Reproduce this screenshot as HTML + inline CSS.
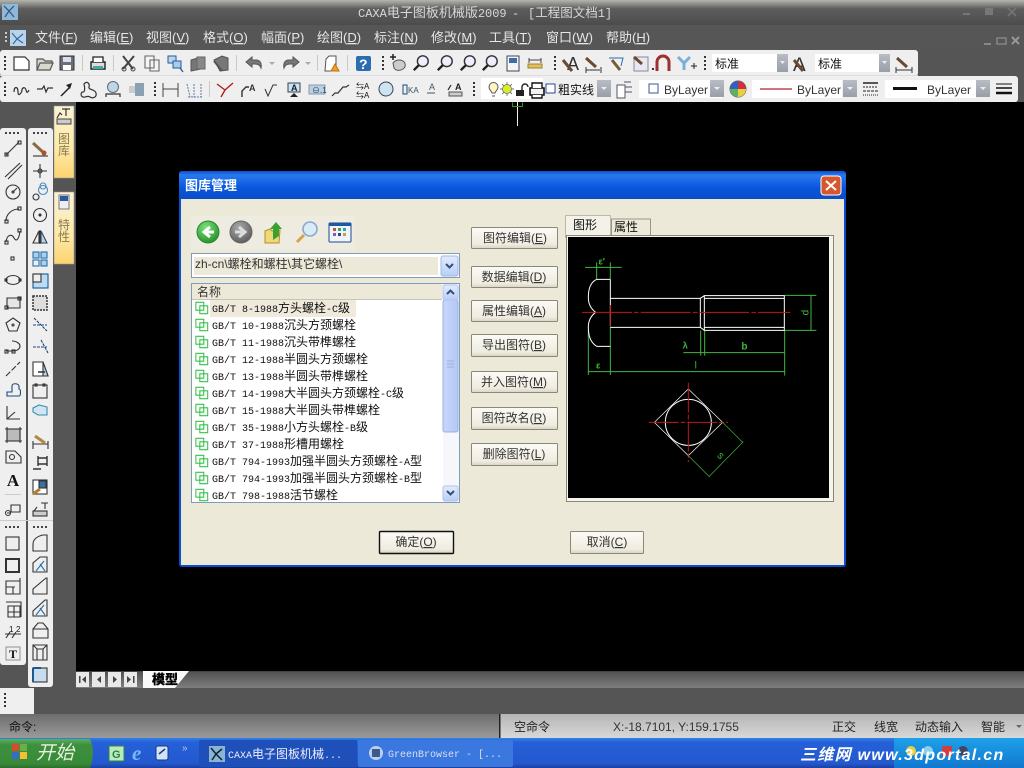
<!DOCTYPE html>
<html><head><meta charset="utf-8"><title>CAXA</title>
<style>
html,body{margin:0;padding:0;background:#000;overflow:hidden}
svg{display:block}
text{font-family:"Liberation Sans","WenQuanYi Zen Hei","Noto Sans CJK SC",sans-serif;font-size:12px;fill:#111}
.m{font-family:"Liberation Mono","WenQuanYi Zen Hei","Noto Sans CJK SC",monospace}
.menu{font-size:13px;fill:#e6e6e6}
.i{fill:none;stroke:#333;stroke-width:1.2}
.l{font-family:"Liberation Mono","WenQuanYi Zen Hei","Noto Sans CJK SC",monospace;font-size:10px;fill:#111}
.l tspan{font-size:12px}
.b{font-size:12px;fill:#333;text-anchor:middle}
.g{fill:none;stroke:#3fb83f;stroke-width:1}
.w{fill:none;stroke:#fff;stroke-width:1}
.r{fill:none;stroke:#c01818;stroke-width:1}
</style></head><body>
<svg width="1024" height="768" viewBox="0 0 1024 768" xmlns="http://www.w3.org/2000/svg">
<defs>
<linearGradient id="tt" x1="0" y1="0" x2="0" y2="1"><stop offset="0" stop-color="#b5b5b0"/><stop offset=".35" stop-color="#5d5d5d"/><stop offset="1" stop-color="#4c4c4c"/></linearGradient>
<linearGradient id="tb" x1="0" y1="0" x2="0" y2="1"><stop offset="0" stop-color="#4f4f4f"/><stop offset="1" stop-color="#7e7e7e"/></linearGradient>
<linearGradient id="cmd" x1="0" y1="0" x2="0" y2="1"><stop offset="0" stop-color="#6d6d6d"/><stop offset="1" stop-color="#9a9a9a"/></linearGradient>
<linearGradient id="cmd2" x1="0" y1="0" x2="0" y2="1"><stop offset="0" stop-color="#b5b5b5"/><stop offset="1" stop-color="#d8d8d8"/></linearGradient>
<linearGradient id="y" x1="0" y1="0" x2="0" y2="1"><stop offset="0" stop-color="#fbf3d6"/><stop offset=".6" stop-color="#fde9a8"/><stop offset="1" stop-color="#fdd36e"/></linearGradient>
<linearGradient id="dt" x1="0" y1="0" x2="0" y2="1"><stop offset="0" stop-color="#0a4fd4"/><stop offset=".15" stop-color="#2a78ee"/><stop offset=".6" stop-color="#0857de"/><stop offset="1" stop-color="#0a4dc6"/></linearGradient>
<linearGradient id="task" x1="0" y1="0" x2="0" y2="1"><stop offset="0" stop-color="#2f7fe8"/><stop offset=".15" stop-color="#2560d8"/><stop offset=".85" stop-color="#2458cf"/><stop offset="1" stop-color="#1a3f9e"/></linearGradient>
<linearGradient id="st" x1="0" y1="0" x2="0" y2="1"><stop offset="0" stop-color="#5fae5f"/><stop offset=".2" stop-color="#3d913d"/><stop offset=".85" stop-color="#388a38"/><stop offset="1" stop-color="#2a6f2a"/></linearGradient>
<linearGradient id="tray" x1="0" y1="0" x2="0" y2="1"><stop offset="0" stop-color="#1ea0ea"/><stop offset="1" stop-color="#1278cf"/></linearGradient>
<linearGradient id="btn" x1="0" y1="0" x2="0" y2="1"><stop offset="0" stop-color="#fbfaf5"/><stop offset=".8" stop-color="#efece0"/><stop offset="1" stop-color="#d8d4c4"/></linearGradient>
<linearGradient id="sb" x1="0" y1="0" x2="1" y2="0"><stop offset="0" stop-color="#c8d6fb"/><stop offset="1" stop-color="#b4c8f6"/></linearGradient>
<linearGradient id="ab" x1="0" y1="0" x2="0" y2="1"><stop offset="0" stop-color="#e4ecfd"/><stop offset="1" stop-color="#b8cdf6"/></linearGradient>
<linearGradient id="cb" x1="0" y1="0" x2="0" y2="1"><stop offset="0" stop-color="#b8bcc4"/><stop offset="1" stop-color="#9a9ea8"/></linearGradient>
<radialGradient id="gc" cx=".4" cy=".3" r=".8"><stop offset="0" stop-color="#7fe07f"/><stop offset="1" stop-color="#1c8a22"/></radialGradient>
<radialGradient id="gg" cx=".4" cy=".3" r=".8"><stop offset="0" stop-color="#aaa"/><stop offset="1" stop-color="#555"/></radialGradient>
<symbol id="li" viewBox="0 0 16 16" overflow="visible"><path d="M1 1.500h9v9H1zM5.500 5.500h9v9h-9z" fill="none" stroke="#35c24a" stroke-width="1.2"/></symbol>
<symbol id="mag" viewBox="0 0 20 20" overflow="visible"><circle cx="12" cy="8" r="6" fill="#eef" stroke="#333" stroke-width="1.6"/><path d="M7.500 12.500L2 18" stroke="#222" stroke-width="2.6"/></symbol>
</defs>

<!-- frame -->
<rect width="1024" height="768" fill="#555"/>
<rect width="1024" height="25" fill="url(#tt)"/>
<rect y="25" width="1024" height="25" fill="#565656"/>
<rect x="2" y="4" width="16" height="16" fill="#8fb8d8"/><path d="M4 6l5 5 5-5M5 17l4-6 5 6" stroke="#3a5a80" stroke-width="1.300" fill="none"/>
<g class="m" style="fill:#d8d8d8">
<text x="358" y="17" class="m" style="fill:#d8d8d8;font-size:12px">CAXA<tspan style="font-size:13px">电子图板机械版</tspan>2009</text>
<text x="512" y="17" class="m" style="fill:#d8d8d8;font-size:12px">-</text>
<text x="528" y="17" class="m" style="fill:#d8d8d8;font-size:12px">[<tspan style="font-size:12.500px">工程图文档</tspan>1]</text>
</g>
<g fill="#777"><rect x="963" y="13" width="7" height="2"/><rect x="985" y="8" width="8" height="7"/><path d="M1008 8l8 8m0-8l-8 8" stroke="#777" stroke-width="1.5"/></g>

<!-- menu -->
<g fill="#ccc"><rect x="5" y="32" width="2" height="2"/><rect x="5" y="36" width="2" height="2"/><rect x="5" y="40" width="2" height="2"/></g>
<rect x="10" y="30" width="16" height="16" fill="#b8d4ec"/><path d="M12 33l5 6 6-5M13 44l4-5 6 4" stroke="#3a6a9c" stroke-width="1.200" fill="none"/>
<text class="menu" x="35" y="42">文件(<tspan text-decoration="underline">F</tspan>)</text>
<text class="menu" x="90" y="42">编辑(<tspan text-decoration="underline">E</tspan>)</text>
<text class="menu" x="146" y="42">视图(<tspan text-decoration="underline">V</tspan>)</text>
<text class="menu" x="203" y="42">格式(<tspan text-decoration="underline">O</tspan>)</text>
<text class="menu" x="261" y="42">幅面(<tspan text-decoration="underline">P</tspan>)</text>
<text class="menu" x="317" y="42">绘图(<tspan text-decoration="underline">D</tspan>)</text>
<text class="menu" x="374" y="42">标注(<tspan text-decoration="underline">N</tspan>)</text>
<text class="menu" x="431" y="42">修改(<tspan text-decoration="underline">M</tspan>)</text>
<text class="menu" x="489" y="42">工具(<tspan text-decoration="underline">T</tspan>)</text>
<text class="menu" x="546" y="42">窗口(<tspan text-decoration="underline">W</tspan>)</text>
<text class="menu" x="606" y="42">帮助(<tspan text-decoration="underline">H</tspan>)</text>
<g fill="#888"><rect x="984" y="43" width="7" height="2"/><rect x="997" y="38" width="9" height="6" fill="none" stroke="#888" stroke-width="1.4"/><path d="M1012 37l7 7m0-7l-7 7" stroke="#999" stroke-width="2"/></g>

<!-- toolbars -->
<rect x="0" y="50" width="918" height="26" rx="3" fill="#efefef"/>
<rect x="0" y="76" width="1018" height="26" rx="3" fill="#efefef"/>
<rect x="0" y="75" width="918" height="1" fill="#ddd"/>
<g fill="#333">
<rect x="4" y="56" width="2" height="2"/><rect x="4" y="60" width="2" height="2"/><rect x="4" y="64" width="2" height="2"/><rect x="4" y="68" width="2" height="2"/>
<rect x="4" y="82" width="2" height="2"/><rect x="4" y="86" width="2" height="2"/><rect x="4" y="90" width="2" height="2"/><rect x="4" y="94" width="2" height="2"/>
<rect x="382" y="56" width="2" height="2"/><rect x="382" y="60" width="2" height="2"/><rect x="382" y="64" width="2" height="2"/><rect x="382" y="68" width="2" height="2"/>
<rect x="554" y="56" width="2" height="2"/><rect x="554" y="60" width="2" height="2"/><rect x="554" y="64" width="2" height="2"/><rect x="554" y="68" width="2" height="2"/>
<rect x="704" y="56" width="2" height="2"/><rect x="704" y="60" width="2" height="2"/><rect x="704" y="64" width="2" height="2"/><rect x="704" y="68" width="2" height="2"/>
<rect x="154" y="82" width="2" height="2"/><rect x="154" y="86" width="2" height="2"/><rect x="154" y="90" width="2" height="2"/><rect x="154" y="94" width="2" height="2"/>
<rect x="473" y="82" width="2" height="2"/><rect x="473" y="86" width="2" height="2"/><rect x="473" y="90" width="2" height="2"/><rect x="473" y="94" width="2" height="2"/>
</g>
<g stroke="#c8c8c8"><path d="M82.500 55v16M113.500 55v16M236.500 55v16M317.500 55v16M347.500 55v16M209.500 81v16"/></g>

<!-- toolbar 1 icons -->
<path d="M14 57h11l4 4v9H14z" fill="#fff" stroke="#333" stroke-width="1.2"/>
<path d="M37 70V59h6l2 2h7v2M37 70l3-7h13l-3 7z" fill="#d8d8d0" stroke="#555" stroke-width="1.2"/>
<path d="M60 56h14v14H60z" fill="#6a7078" stroke="#333"/><rect x="63" y="57" width="8" height="5" fill="#dde"/><rect x="63" y="65" width="8" height="5" fill="#fff"/>
<path d="M91 62h14v7H91z" fill="#ddd" stroke="#222" stroke-width="1.4"/><path d="M93 62v-5h10v5" fill="#fff" stroke="#222" stroke-width="1.3"/><rect x="93" y="66" width="10" height="3" fill="#4aa6a0"/>
<path d="M123 56l10 13M134 56l-11 13" stroke="#444" stroke-width="2" fill="none"/><circle cx="124" cy="69" r="2" fill="none" stroke="#444"/><circle cx="133" cy="69" r="2" fill="none" stroke="#444"/>
<path d="M145 56h9v12h-9zM150 60h9v11h-9z" fill="#f4f4f4" stroke="#666" stroke-width="1.1"/>
<rect x="168" y="56" width="8" height="7" fill="#b8d8f0" stroke="#2a5a9a"/><rect x="173" y="61" width="8" height="7" fill="#a8ccec" stroke="#2a5a9a"/><path d="M180 68l3 4" stroke="#2a5a9a" stroke-width="1.4"/>
<path d="M191 60l10-3v12l-10 2z" fill="#777" stroke="#555"/><rect x="197" y="57" width="8" height="12" fill="#888" stroke="#666"/>
<path d="M214 60l8-4 6 2v12l-8 1z" fill="#777" stroke="#555"/><path d="M214 61l8 10" stroke="#555" stroke-width="2"/>
<path d="M246 62l6-5v3h4c4 0 6 3 5 8-1-3-3-4-6-4h-3v3z" fill="#777" stroke="#555"/><path d="M269 62h6l-3 3z" fill="#aaa"/>
<path d="M299 62l-6-5v3h-4c-4 0-6 3-5 8 1-3 3-4 6-4h3v3z" fill="#777" stroke="#555"/><path d="M305 62h6l-3 3z" fill="#aaa"/>
<path d="M326 59l3-3h7v15h-11z" fill="#fff" stroke="#555"/><path d="M335 64l-4 7h8z" fill="#f0a020" stroke="#c07010"/>
<rect x="356" y="56" width="15" height="15" rx="2" fill="#2a6db0"/><text x="359" y="69" style="font-size:14px;font-weight:bold;fill:#fff">?</text>
<path d="M393 63c2-3 7-4 10-2s3 6 0 8-7 2-9-1z" fill="#ccc" stroke="#555"/><path d="M393 54v6M390 57h6" stroke="#222" stroke-width="1.5"/>
<use href="#mag" x="412" y="54" width="18" height="18"/><use href="#mag" x="436" y="54" width="18" height="18"/><use href="#mag" x="459" y="54" width="18" height="18"/><use href="#mag" x="481" y="54" width="18" height="18"/>
<rect x="507" y="56" width="12" height="15" fill="#f4f4f4" stroke="#445"/><rect x="509" y="58" width="8" height="5" fill="#3a6ea8"/>
<path d="M529 58v5M541 58v5M529 60h12" stroke="#444" fill="none"/><rect x="528" y="64" width="14" height="4" fill="#e0c060" stroke="#a08030"/>
<text x="567" y="70" style="font-size:18px;fill:#333">A</text><path d="M563 60l9 11" stroke="#6a4a30" stroke-width="3"/>
<path d="M586 58l10 9" stroke="#6a4a30" stroke-width="3"/><path d="M586 70h14M586 67v6M601 67v6" stroke="#333" fill="none"/>
<path d="M609 58h14l-2 8" stroke="#2a6db0" fill="none"/><path d="M612 60l8 10" stroke="#7a5a30" stroke-width="3"/>
<rect x="634" y="57" width="14" height="14" fill="#e8e8f0" stroke="#889"/><path d="M634 57l8 7" stroke="#6a4a30" stroke-width="3"/>
<path d="M657 71V62a6 6 0 0 1 12 0v9" fill="none" stroke="#a03030" stroke-width="3"/><rect x="652" y="68" width="2" height="2" fill="#333"/>
<path d="M678 57l6 6 6-6M684 63v7" stroke="#7ab0d8" stroke-width="3" fill="none"/><path d="M691 66h6M694 63v6" stroke="#222"/>

<!-- combos row1 -->
<rect x="712" y="54" width="76" height="18" fill="#fff"/><rect x="777" y="54" width="11" height="18" fill="url(#cb)"/><path d="M780 61h5l-2.500 3z" fill="#eee"/>
<text x="715" y="68">标准</text>
<text x="793" y="71" style="font-size:19px;fill:#333">A</text><path d="M794 60l9 11" stroke="#6a4a30" stroke-width="3"/>
<rect x="815" y="54" width="75" height="18" fill="#fff"/><rect x="879" y="54" width="11" height="18" fill="url(#cb)"/><path d="M882 61h5l-2.500 3z" fill="#eee"/>
<text x="818" y="68">标准</text>
<path d="M897 58l10 9" stroke="#6a4a30" stroke-width="3"/><path d="M896 70h16M896 67v6M912 67v6" stroke="#333" fill="none"/>

<!-- toolbar 2 icons -->
<path d="M14 92c0-6 4-6 4 0s4 0 4-2 3-4 4 0 2 2 3 0" class="i"/>
<path d="M37 89h5l2-3 2 6 2-4h5" class="i"/>
<path d="M61 96l9-9" stroke="#222" stroke-width="1.5"/><path d="M66 85l6-2-2 6z" fill="#222"/>
<path d="M84 84c3-4 6 0 5 3s6 2 7 6-3 6-6 4-4 1-7 0-2-5 0-5 2-4 1-8z" class="i"/>
<circle cx="113" cy="87" r="5.500" fill="#bcd8e8" stroke="#667"/><path d="M106 97v-3h14v3" class="i"/>
<rect x="129" y="86" width="6" height="7" fill="#ccc"/><rect x="135" y="83" width="9" height="13" fill="#8aa0b4"/>
<path d="M163 83v14M178 83v14M163 89h15" stroke="#444" fill="none"/>
<path d="M188 97h14M194 84v13M201 84v13M187 84l3 13" stroke="#5a7ea8" stroke-dasharray="2 1" fill="none"/>
<path d="M217 84l8 6 8-7M225 90l-4 7" stroke="#b02020" stroke-width="1.4" fill="none"/>
<path d="M242 97v-6l4-4h3" stroke="#333" stroke-width="1.4" fill="none"/><text x="249" y="91" style="font-size:9px;font-weight:bold;fill:#333">A</text>
<path d="M265 89l3 7 5-11h4" stroke="#333" fill="none"/>
<rect x="288" y="83" width="12" height="9" fill="#cfe0ef" stroke="#345"/><text x="291" y="91" style="font-size:9px;font-weight:bold;fill:#123">A</text><path d="M294 93l-4 4h8z" fill="#222"/>
<rect x="309" y="85" width="16" height="9" fill="#bcd0e4" stroke="#89a"/><text x="312" y="93" style="font-size:8px;fill:#246">⊖.1</text>
<path d="M332 96l3-3h3l5-6h3l3-2" class="i"/>
<text x="356" y="89" style="font-size:8px">⇆A</text><text x="356" y="98" style="font-size:8px">⇆A</text>
<circle cx="386" cy="89" r="7" fill="#cfe2f0" stroke="#345"/>
<rect x="403" y="85" width="4" height="9" fill="none" stroke="#1a4a7a"/><text x="408" y="93" style="font-size:8px;fill:#356">KA</text>
<text x="429" y="90" style="font-size:9px;fill:#456">A</text><path d="M427 93h8" stroke="#456"/>
<text x="455" y="90" style="font-size:9px;font-weight:bold;fill:#222">A</text><path d="M448 90l3-5" stroke="#222" stroke-width="1.2"/><rect x="449" y="92" width="13" height="4" fill="#ccc" stroke="#555"/>

<rect x="481" y="78" width="62" height="21" fill="#fff"/>
<path d="M489 87a4.500 4.500 0 0 1 9 0c0 3-2 3-3 6h-3c-1-3-3-3-3-6zM492 96h3" fill="#fff6c0" stroke="#556" stroke-width="1"/>
<path d="M507 82v14M500 89h14M502 84l10 10M512 84l-10 10" stroke="#445" stroke-width=".7"/><circle cx="507" cy="89" r="4.500" fill="#d8ee20" stroke="#667" stroke-width=".7"/>
<path d="M516 90h8v6h-8z" fill="#222"/><path d="M522 90v-3a3 3 0 0 1 6 0" fill="none" stroke="#222" stroke-width="1.400"/>
<path d="M530 88h14v7h-14z" fill="#f4f4f4" stroke="#111" stroke-width="1.6"/><path d="M532 88v-5h10v5M532 95v3h10v-3" fill="#fff" stroke="#111" stroke-width="1.400"/>
<rect x="546" y="84" width="9" height="9" fill="#fff" stroke="#2a4a90"/>
<text x="558" y="94" style="font-size:12px">粗实线</text>
<rect x="597" y="80" width="14" height="17" fill="url(#cb)"/><path d="M601 87h6l-3 3z" fill="#eee"/>
<path d="M617 85h8v13h-8zM624 82h7M625 87h7M625 92h7" stroke="#556" fill="#fff"/>
<rect x="639" y="80" width="83" height="18" fill="#fff"/><rect x="649" y="84" width="9" height="9" fill="#fff" stroke="#3a5a90"/>
<text x="664" y="94" style="font-size:12px;fill:#333">ByLayer</text>
<rect x="710" y="80" width="14" height="17" fill="url(#cb)"/><path d="M714 87h6l-3 3z" fill="#eee"/>
<circle cx="738" cy="89" r="8" fill="#e0a050" stroke="#666"/><path d="M738 81a8 8 0 0 0-8 8h8z" fill="#3060c0"/><path d="M738 81a8 8 0 0 1 8 8h-8z" fill="#d03040"/><path d="M730 89a8 8 0 0 0 8 8v-8z" fill="#60b060"/><path d="M746 89a8 8 0 0 1-8 8v-8z" fill="#e8d040"/>
<rect x="752" y="80" width="90" height="18" fill="#fff"/><path d="M760 89h32" stroke="#b02030" stroke-width="1.200"/>
<text x="797" y="94" style="font-size:12px;fill:#333">ByLayer</text>
<rect x="843" y="80" width="14" height="17" fill="url(#cb)"/><path d="M847 87h6l-3 3z" fill="#eee"/>
<path d="M863 83h15" stroke="#222" stroke-width="1.500"/><path d="M863 87h15" stroke="#222" stroke-dasharray="2 1"/><path d="M863 91h15" stroke="#222" stroke-dasharray="3 1"/><path d="M863 95h15" stroke="#222" stroke-dasharray="1 1"/>
<rect x="885" y="80" width="91" height="18" fill="#fff"/><rect x="893" y="87" width="24" height="3" fill="#111"/>
<text x="927" y="94" style="font-size:12px;fill:#333">ByLayer</text>
<rect x="976" y="80" width="14" height="17" fill="url(#cb)"/><path d="M980 87h6l-3 3z" fill="#eee"/>
<path d="M996 84h16" stroke="#111"/><path d="M996 88h16" stroke="#111" stroke-width="1.500"/><path d="M996 93h16" stroke="#111" stroke-width="2.500"/>

<!-- canvas -->
<rect x="76" y="102" width="948" height="569" fill="#000"/>
<path d="M517.500 102v24" stroke="#f0f0f0"/><path d="M512.500 102.500v4h10v-4" fill="none" stroke="#2a9a2a"/>

<!-- side tabs -->
<rect x="54" y="106" width="20" height="72" fill="url(#y)" stroke="#999" stroke-width=".6"/>
<rect x="54" y="192" width="20" height="72" fill="url(#y)" stroke="#999" stroke-width=".6"/>
<text x="64" y="143" text-anchor="middle" style="font-size:12px;fill:#8a7a4a">图</text>
<text x="64" y="155" text-anchor="middle" style="font-size:12px;fill:#8a7a4a">库</text>
<text x="64" y="229" text-anchor="middle" style="font-size:12px;fill:#8a7a4a">特</text><text x="64" y="241" text-anchor="middle" style="font-size:12px;fill:#8a7a4a">性</text>
<path d="M57 118l3-5 2 2M62 109h8M66 109v7" stroke="#333" fill="none" stroke-width="1.200"/><rect x="57" y="119" width="14" height="5" fill="#ccc" stroke="#444"/>
<rect x="59" y="195" width="10" height="14" fill="#eee" stroke="#778"/><rect x="60" y="196" width="8" height="5" fill="#2a5a9a"/>

<!-- left toolbars -->
<rect x="0" y="128" width="26" height="537" rx="3" fill="#efefef"/>
<rect x="28" y="128" width="25" height="559" rx="3" fill="#efefef"/>
<g fill="#444">
<rect x="5" y="132" width="2" height="2"/><rect x="9" y="132" width="2" height="2"/><rect x="13" y="132" width="2" height="2"/><rect x="17" y="132" width="2" height="2"/>
<rect x="33" y="132" width="2" height="2"/><rect x="37" y="132" width="2" height="2"/><rect x="41" y="132" width="2" height="2"/><rect x="45" y="132" width="2" height="2"/>
<rect x="5" y="526" width="2" height="2"/><rect x="9" y="526" width="2" height="2"/><rect x="13" y="526" width="2" height="2"/><rect x="17" y="526" width="2" height="2"/>
<rect x="33" y="526" width="2" height="2"/><rect x="37" y="526" width="2" height="2"/><rect x="41" y="526" width="2" height="2"/><rect x="45" y="526" width="2" height="2"/>
</g>
<rect x="0" y="520" width="53" height="1" fill="#ccc"/>
<!-- col 1 -->
<g fill="none" stroke="#333" stroke-width="1.100">
<path d="M6 155l13-13"/><rect x="5" y="153" width="3" height="3"/><rect x="18" y="141" width="3" height="3"/>
<path d="M5 177l15-14M8 179l14-14"/>
<circle cx="13" cy="192" r="7"/><circle cx="13" cy="192" r="1"/><path d="M13 192l4-4"/>
<path d="M6 221c0-7 6-12 13-12"/><rect x="5" y="220" width="3" height="3"/><rect x="18" y="207" width="3" height="3"/>
<path d="M6 242c1-8 6-8 8-4s5 2 6-7"/><rect x="5" y="241" width="3" height="3"/><rect x="18" y="229" width="3" height="3"/>
<rect x="11" y="257" width="3" height="3"/>
<ellipse cx="13" cy="280" rx="7" ry="4.500"/><rect x="5" y="279" width="2" height="2"/><rect x="19" y="279" width="2" height="2"/>
<path d="M7 298h13v10H7z" fill="#e6e6e6"/><rect x="5" y="306" width="3" height="3"/><rect x="18" y="297" width="3" height="3"/>
<path d="M13 318l7 5-3 8H9l-3-8z"/><circle cx="13" cy="325" r="1"/>
<path d="M6 351h7c5 0 7-3 7-5s-3-5-8-5"/><rect x="5" y="350" width="3" height="3"/><rect x="12" y="350" width="3" height="3"/>
<path d="M6 376l14-14" stroke-dasharray="6 2"/>
<path d="M7 396v-4h5v-6c0-3 6-3 7 0v3c2 0 2 7 0 7z" stroke="#1a4a7a"/>
<path d="M7 406v13h13M7 419l8-7"/>
<rect x="7" y="429" width="13" height="12" fill="#bbb"/><path d="M5 429h17M5 441h17M7 427v16M20 427v16"/>
<path d="M6 451h9l6 6v6H6z"/><circle cx="12" cy="457" r="2.500"/>
<path d="M7 513h4M11 505h9v7h-9z"/><circle cx="8" cy="513" r="2.500"/>
<rect x="6" y="537" width="13" height="13"/>
<rect x="6" y="559" width="13" height="13" stroke-width="2"/>
<path d="M6 581h14v13H6zM6 587h9M13 587v7M20 578v16"/>
<path d="M6 602h15v15M8 606h12v11H8zM14 606v11M8 612h12"/>
<path d="M6 638l4-6M12 638l4-6M5 634h16"/>
<rect x="6" y="647" width="14" height="13" stroke="#999"/>
</g>
<text x="13" y="486" text-anchor="middle" style="font-family:'Liberation Serif',serif;font-size:17px;font-weight:bold;fill:#111">A</text>
<text x="9" y="632" style="font-size:8px">1</text><text x="16" y="632" style="font-size:8px">2</text>
<text x="13" y="658" text-anchor="middle" style="font-family:'Liberation Serif',serif;font-size:12px;font-weight:bold;fill:#111">T</text>
<rect x="5" y="494" width="16" height="1" fill="#ccc"/>
<!-- col 2 -->
<g fill="none" stroke="#333" stroke-width="1.100">
<path d="M33 143l12 11" stroke="#8a6a40" stroke-width="3"/><circle cx="44" cy="153" r="2.500" fill="#b05020" stroke="none"/><path d="M33 156h15"/>
<path d="M40 164v14M33 171h14"/><circle cx="40" cy="171" r="2"/>
<circle cx="43" cy="190" r="4.500" stroke="#4a8ac0"/><circle cx="43" cy="186" r="3" stroke="#4a8ac0"/><circle cx="36" cy="197" r="3"/>
<circle cx="40" cy="215" r="6.500"/><circle cx="40" cy="215" r="1" fill="#222"/>
<path d="M33 243l6-12v12zM40 230v14"/><path d="M47 243l-6-12v12z" fill="#b8d4ea" stroke="#345"/>
<g stroke="#2a70a8"><rect x="33" y="252" width="6" height="6" fill="#a8d0f0"/><rect x="41" y="252" width="6" height="6" fill="#a8d0f0"/><rect x="33" y="260" width="6" height="6"/><rect x="41" y="260" width="6" height="6" fill="#a8d0f0"/></g>
<rect x="33" y="274" width="15" height="14" fill="#bcdcf4" stroke="#1a5a90"/><rect x="33" y="274" width="8" height="8" fill="#eee" stroke="#333"/>
<rect x="33" y="296" width="14" height="14" fill="#ddd" stroke-dasharray="2 1" stroke-width="1.500"/>
<path d="M34 318l13 13M33 325h14" stroke-dasharray="3 1" stroke="#1a4a7a"/>
<path d="M41 340l7 13M33 347h14" stroke-dasharray="3 1" stroke="#1a4a7a"/>
<path d="M33 362h10l5 14H33z" fill="#fff"/><path d="M43 362l5 14h-5z" fill="#b8d4ea"/><path d="M38 372h7" stroke-width="1.500"/>
<rect x="33" y="385" width="14" height="13"/><rect x="35" y="384" width="2" height="2" fill="#1a5a90"/><rect x="43" y="384" width="2" height="2" fill="#1a5a90"/>
<path d="M33 408l6-3 8 2v8h-9l-5-3z" stroke="#3a8ab0" fill="#d0e6f0"/>
<path d="M33 444h15M33 441v8M48 441v8"/><path d="M35 436l10 7" stroke="#b08a40" stroke-width="3"/>
<path d="M38 458h9M38 464h9M38 456v10M47 456v10M33 469h8" stroke-width="1.400"/>
<rect x="33" y="480" width="14" height="14" fill="#fff"/><rect x="39" y="481" width="7" height="7" fill="#3a6ea8"/><path d="M33 494l7-5" stroke="#b08030" stroke-width="3"/>
<path d="M34 511l3-4M41 503h7M45 503v6"/><rect x="33" y="511" width="14" height="5" fill="#ccc"/>
<g stroke="#333"><path d="M33 551v-7c0-5 5-8 10-9h4v16z"/>
<path d="M33 572v-9l7-6h7v15z"/><path d="M36 571l8-10M40 564l5 7" stroke="#2a70a8"/>
<path d="M33 594v-5l13-11h1v16z"/>
<path d="M33 616v-5l12-11h2v16z"/><path d="M36 615l8-10M40 608l5 7" stroke="#2a70a8"/>
<path d="M33 638v-9l5-6h5l5 6v9zM33 629h15"/>
<path d="M33 645h14v15H33zM33 645l4 4h6l4-4M37 649v11M43 649v11"/>
<rect x="33" y="668" width="14" height="14" fill="#c8dcee"/><path d="M33 668h8M33 668v14" stroke="#1a5a90" stroke-width="2"/></g>
</g>

<!-- tab bar -->
<rect x="76" y="671" width="948" height="17" fill="url(#tb)"/>
<rect x="76" y="671" width="948" height="1" fill="#444"/>
<g fill="#e8e8e8"><rect x="76" y="672" width="13" height="15"/><rect x="92" y="672" width="13" height="15"/><rect x="108" y="672" width="13" height="15"/><rect x="124" y="672" width="13" height="15"/></g>
<g fill="#444"><path d="M79 676h1.500v7H79zM86 676v7l-4-3.500zM101 676v7l-4-3.500zM113 676v7l4-3.500zM127 676v7l4-3.500zM133 676h1.500v7H133z"/></g>
<path d="M143 671h46l-14 17h-32z" fill="#fafafa"/>
<text x="152" y="684" style="font-size:13px;font-weight:bold;fill:#000;stroke:#000;stroke-width:.4">模型</text>

<!-- bottom -->
<rect x="0" y="688" width="34" height="26" fill="#efefef"/>
<g fill="#333"><rect x="4" y="693" width="2" height="2"/><rect x="4" y="697" width="2" height="2"/><rect x="4" y="701" width="2" height="2"/><rect x="4" y="705" width="2" height="2"/></g>
<rect y="714" width="500" height="24" fill="url(#cmd)"/>
<rect x="500" y="714" width="524" height="24" fill="url(#cmd2)"/>
<rect x="499" y="714" width="1.500" height="24" fill="#222"/>
<text x="9" y="731" style="fill:#111">命令:</text>
<text x="514" y="731" style="fill:#222">空命令</text>
<text x="613" y="731" style="fill:#333;font-size:12px">X:-18.7101, Y:159.1755</text>
<text x="832" y="731" style="fill:#222">正交</text><text x="874" y="731" style="fill:#222">线宽</text><text x="915" y="731" style="fill:#222">动态输入</text><text x="981" y="731" style="fill:#222">智能</text>
<path d="M1016 725h6l-3 3z" fill="#666"/>

<!-- taskbar -->
<rect y="738" width="1024" height="30" fill="url(#task)"/>
<path d="M0 739h90q6 13 0 29H0z" fill="url(#st)"/>
<g><rect x="12" y="744" width="7" height="7" fill="#d84a2a"/><rect x="20" y="744" width="7" height="7" fill="#6ab04a"/><rect x="12" y="752" width="7" height="7" fill="#3a6ac8"/><rect x="20" y="752" width="7" height="7" fill="#f0c030"/></g>
<text x="36" y="759" style="font-size:19px;font-style:italic;fill:#e8f0e0">开始</text>
<rect x="109" y="746" width="15" height="15" fill="#bfe8c0" stroke="#2a8a3a"/><text x="112" y="758" style="font-size:11px;font-weight:bold;fill:#1a8a3a">G</text>
<text x="132" y="760" style="font-family:'Liberation Serif',serif;font-size:21px;font-weight:bold;font-style:italic;fill:#7ab8f4">e</text>
<rect x="156" y="746" width="12" height="14" rx="2" fill="#d0e4f8" stroke="#1a3a80"/><path d="M159 754l6-5" stroke="#1a3a80" stroke-width="1.500"/>
<text x="182" y="751" style="font-size:10px;fill:#bcd">»</text>
<rect x="199" y="740" width="158" height="27" rx="2" fill="#1f4fb8"/>
<rect x="209" y="746" width="16" height="16" fill="#8ab4d4"/><path d="M211 748l5 6 6-5M212 760l4-6 6 6" stroke="#123" stroke-width="1.500" fill="none"/>
<text x="228" y="758" class="m" style="font-size:10px;fill:#eef">CAXA<tspan style="font-size:12px">电子图板机械</tspan>...</text>
<rect x="358" y="740" width="155" height="27" rx="2" fill="#3a78e0"/>
<circle cx="376" cy="753" r="7" fill="#bcd0ee"/><rect x="372" y="749" width="8" height="8" fill="#3a5a90"/>
<text x="388" y="757" class="m" style="font-size:10px;fill:#dde">GreenBrowser - [...</text>
<rect x="894" y="738" width="130" height="30" fill="url(#tray)"/>
<g><circle cx="911" cy="751" r="5" fill="#e8d040"/><circle cx="928" cy="751" r="5" fill="#8ad0e8"/><rect x="942" y="746" width="10" height="10" fill="#d04040"/><circle cx="963" cy="751" r="5" fill="#446"/></g>
<text x="800" y="760" style="font-size:16px;font-weight:bold;font-style:italic;fill:#fff" letter-spacing="1.300">三维网 www.3dportal.cn</text>

<!-- dialog -->
<rect x="179" y="171" width="667" height="396" rx="3" fill="#0a4fd0"/>
<rect x="179" y="171" width="667" height="28" rx="3" fill="url(#dt)"/>
<rect x="181" y="199" width="663" height="366" fill="#ece9d8"/>
<text x="185" y="190" style="font-size:13px;font-weight:bold;fill:#fff">图库管理</text>
<rect x="821" y="176" width="20" height="19" rx="3" fill="#d8562e" stroke="#fff"/><path d="M826 181l10 9m0-9l-10 9" stroke="#fff" stroke-width="2"/>

<!-- dialog toolbar -->
<rect x="191" y="216" width="164" height="34" fill="#eeebe0"/>
<circle cx="208" cy="232" r="11" fill="url(#gc)" stroke="#2a8a2a"/><path d="M214 232h-7m3-5l-6 5 6 5" stroke="#fff" stroke-width="3" fill="none"/>
<circle cx="241" cy="232" r="11" fill="url(#gg)" stroke="#666"/><path d="M235 232h7m-3-5l6 5-6 5" stroke="#ddd" stroke-width="3" fill="none"/>
<path d="M265 231l5-2 2 2 8-1-1 13-14 0z" fill="#f0d878" stroke="#b09030"/><path d="M276 222l6 7h-3v7l-6 4 0-11h-3z" fill="#3aa030"/>
<circle cx="310" cy="229" r="7" fill="#d8ecf8" stroke="#8aa8c8" stroke-width="1.600"/><path d="M304 235l-7 7" stroke="#d8a050" stroke-width="3"/>
<rect x="329" y="223" width="22" height="19" rx="1" fill="#f0f4fa" stroke="#1a4a8a"/><rect x="329" y="223" width="22" height="3" fill="#1a5aa0"/>
<g><rect x="333" y="228" width="3" height="3" fill="#c05040"/><rect x="338" y="228" width="3" height="3" fill="#40a050"/><rect x="343" y="228" width="3" height="3" fill="#30a0b0"/><rect x="333" y="233" width="3" height="3" fill="#8060a0"/><rect x="338" y="233" width="3" height="3" fill="#2a4a8a"/><rect x="343" y="233" width="3" height="3" fill="#c0a040"/></g>

<!-- combo -->
<rect x="191.500" y="253.500" width="268" height="24" fill="#fff" stroke="#7f9db9"/>
<rect x="194" y="257" width="244" height="18" fill="#ece9d8"/>
<text x="195" y="268" style="font-size:12px;fill:#333">zh-cn\螺栓和螺柱\其它螺栓\</text>
<rect x="441" y="256" width="17" height="20" rx="2" fill="url(#ab)" stroke="#a0b8e4"/><path d="M446 264l3.500 3.500 3.500-3.500" stroke="#33507a" stroke-width="2" fill="none"/>

<!-- list -->
<rect x="191.500" y="283.500" width="268" height="219" fill="#fff" stroke="#7f9db9"/>
<rect x="192" y="284" width="250" height="16" fill="#ece9d8"/><rect x="192" y="299" width="250" height="1" fill="#c8c4b4"/>
<text x="197" y="296" style="fill:#333">名称</text>
<rect x="210" y="300" width="146" height="17" fill="#f0eadc"/>
<rect x="443" y="284" width="16" height="218" fill="#f6f7fb"/>
<rect x="443" y="300" width="15" height="132" rx="2" fill="url(#sb)" stroke="#9ab0e0"/><path d="M447 361h7M447 364h7M447 367h7" stroke="#9ab0d8"/>
<rect x="443" y="285" width="15" height="15" rx="2" fill="url(#ab)" stroke="#b0c4ea"/><path d="M447 294l3.500-3.500 3.500 3.500" stroke="#33507a" stroke-width="2" fill="none"/>
<rect x="443" y="486" width="15" height="15" rx="2" fill="url(#ab)" stroke="#b0c4ea"/><path d="M447 491l3.500 3.500 3.500-3.500" stroke="#33507a" stroke-width="2" fill="none"/>
<svg x="192" y="300" width="250" height="202" viewBox="192 300 250 202">
<use href="#li" x="195" y="301" width="14" height="14"/><text class="l" x="212" y="312">GB/T 8-1988<tspan>方头螺栓</tspan>-C<tspan>级</tspan></text>
<use href="#li" x="195" y="318" width="14" height="14"/><text class="l" x="212" y="329">GB/T 10-1988<tspan>沉头方颈螺栓</tspan></text>
<use href="#li" x="195" y="335" width="14" height="14"/><text class="l" x="212" y="346">GB/T 11-1988<tspan>沉头带榫螺栓</tspan></text>
<use href="#li" x="195" y="352" width="14" height="14"/><text class="l" x="212" y="363">GB/T 12-1988<tspan>半圆头方颈螺栓</tspan></text>
<use href="#li" x="195" y="369" width="14" height="14"/><text class="l" x="212" y="380">GB/T 13-1988<tspan>半圆头带榫螺栓</tspan></text>
<use href="#li" x="195" y="386" width="14" height="14"/><text class="l" x="212" y="397">GB/T 14-1998<tspan>大半圆头方颈螺栓</tspan>-C<tspan>级</tspan></text>
<use href="#li" x="195" y="403" width="14" height="14"/><text class="l" x="212" y="414">GB/T 15-1988<tspan>大半圆头带榫螺栓</tspan></text>
<use href="#li" x="195" y="420" width="14" height="14"/><text class="l" x="212" y="431">GB/T 35-1988<tspan>小方头螺栓</tspan>-B<tspan>级</tspan></text>
<use href="#li" x="195" y="437" width="14" height="14"/><text class="l" x="212" y="448">GB/T 37-1988<tspan>形槽用螺栓</tspan></text>
<use href="#li" x="195" y="454" width="14" height="14"/><text class="l" x="212" y="465">GB/T 794-1993<tspan>加强半圆头方颈螺栓</tspan>-A<tspan>型</tspan></text>
<use href="#li" x="195" y="471" width="14" height="14"/><text class="l" x="212" y="482">GB/T 794-1993<tspan>加强半圆头方颈螺栓</tspan>-B<tspan>型</tspan></text>
<use href="#li" x="195" y="488" width="14" height="14"/><text class="l" x="212" y="499">GB/T 798-1988<tspan>活节螺栓</tspan></text>
</svg>

<!-- buttons -->
<g stroke="#8a8878" fill="url(#btn)">
<rect x="471.500" y="227.500" width="86" height="21" rx="1"/><rect x="471.500" y="266.500" width="86" height="21" rx="1"/><rect x="471.500" y="300.500" width="86" height="21" rx="1"/><rect x="471.500" y="334.500" width="86" height="22" rx="1"/><rect x="471.500" y="371.500" width="86" height="21" rx="1"/><rect x="471.500" y="407.500" width="86" height="22" rx="1"/><rect x="471.500" y="443.500" width="86" height="22" rx="1"/>
</g>
<text class="b" x="515" y="242">图符编辑(<tspan text-decoration="underline">E</tspan>)</text>
<text class="b" x="514" y="281">数据编辑(<tspan text-decoration="underline">D</tspan>)</text>
<text class="b" x="514" y="315">属性编辑(<tspan text-decoration="underline">A</tspan>)</text>
<text class="b" x="514" y="349">导出图符(<tspan text-decoration="underline">B</tspan>)</text>
<text class="b" x="514" y="386">并入图符(<tspan text-decoration="underline">M</tspan>)</text>
<text class="b" x="514" y="422">图符改名(<tspan text-decoration="underline">R</tspan>)</text>
<text class="b" x="514" y="458">删除图符(<tspan text-decoration="underline">L</tspan>)</text>
<rect x="379.500" y="531.500" width="74" height="22" rx="1" fill="url(#btn)" stroke="#111" stroke-width="1.400"/>
<text class="b" x="416" y="546">确定(<tspan text-decoration="underline">O</tspan>)</text>
<rect x="570.500" y="531.500" width="73" height="22" rx="1" fill="url(#btn)" stroke="#8a8878"/>
<text class="b" x="607" y="546">取消(<tspan text-decoration="underline">C</tspan>)</text>

<!-- tabs + preview -->
<rect x="565.500" y="215.500" width="45" height="22" fill="#f4f2e8" stroke="#bbb8a8"/>
<path d="M611.500 236v-17h39v17" fill="#ece9d8" stroke="#999686"/>
<text x="573" y="229">图形</text><text x="614" y="231">属性</text>
<rect x="566.500" y="235.500" width="267" height="266" fill="#f6f4ea" stroke="#8a8878"/>
<rect x="568" y="237" width="261" height="261" fill="#000"/>
<svg x="560" y="210" width="280" height="300" viewBox="0 0 840 900">
<g fill="none">
<g class="g" style="stroke-width:3"><path d="M75 172h110M110 157v50M151 157v50M85 360v135M151 350v145M85 485h590M370 428h304M422 362v75M434 362v75M674 362v135M674 256h95M674 361h95M753 256v105"/></g>
<g class="w" style="stroke-width:3"><path d="M151 208v140M110 208h41M110 409h41M110 208c-20 10-25 30-25 55 0 20 10 35 22 44-12 9-22 24-22 44 0 25 5 45 25 58M151 265h270M151 352h270M421 265v87M421 265l12-8h240v104H433l-12-9M433 257v104M433 265h240M433 352h240M673 257v104"/>
<path d="M385 537L488 637 385 737 283 637Z" style="stroke-width:2"/><circle cx="385" cy="637" r="69"/></g>
<g class="r" style="stroke-width:3"><path d="M66 307h625" stroke-dasharray="150 6 14 6"/><path d="M151 285v65"/><path d="M266 637h238M385 518v238" stroke-dasharray="90 6 14 6"/></g>
<g class="g" style="stroke-width:2"><path d="M488 637l60 60M385 737l64 64M447 800l103-105"/></g>
</g>
<text x="115" y="163" style="font-size:28px;font-weight:bold;fill:#3fb83f">ε'</text><text x="108" y="476" style="font-size:28px;font-weight:bold;fill:#3fb83f">ε</text><text x="368" y="416" style="font-size:28px;font-weight:bold;fill:#3fb83f">λ</text><text x="544" y="418" style="font-size:30px;font-weight:bold;fill:#3fb83f">b</text><text x="404" y="476" style="font-size:30px;fill:#3fb83f">l</text><text x="730" y="316" style="font-size:30px;fill:#3fb83f" transform="rotate(-90 738 308)">d</text><text x="474" y="748" style="font-size:32px;fill:#3fb83f" transform="rotate(45 484 738)">s</text>
</svg>
</svg>
</body></html>
